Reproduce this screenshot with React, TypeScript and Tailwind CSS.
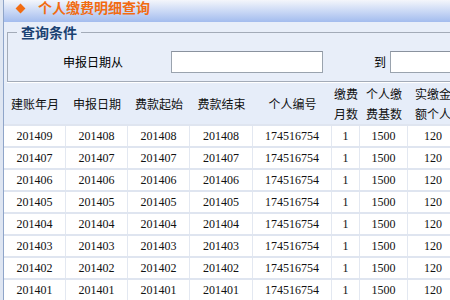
const rows = ['201409', '201407', '201406', '201405', '201404', '201403', '201402', '201401']
const rowDates = ['201408', '201407', '201406', '201405', '201404', '201403', '201402', '201401']

const cjk = "font-['Noto_Sans_CJK_SC',sans-serif]"
const num = "font-['Liberation_Serif','Noto_Sans_CJK_SC',serif]"

const cols = 'grid grid-cols-[62px_62px_62px_63px_79px_28px_48px_50px]'

function HeaderCell({ lines }: { lines: string[] }) {
  return (
    <div className="flex flex-col items-center justify-center leading-[20px] whitespace-nowrap">
      {lines.map((l) => (
        <span key={l}>{l}</span>
      ))}
    </div>
  )
}

export default function App() {
  return (
    <div className={`w-[450px] h-[300px] overflow-hidden bg-[#dfe6f2] pl-[3px] ${cjk}`}>
      <div className="h-full border-l border-[#8fa5c9] bg-[#e8eef9] flex flex-col">
        {/* Title bar */}
        <div className="h-[22px] shrink-0 bg-gradient-to-b from-[#f4f6fb] to-[#a3bcee] flex items-start pl-[13px]">
          <div className="w-[7px] h-[7px] rotate-45 bg-[#f26c12] mt-[5px]" />
          <span className="ml-[14px] text-[14px] leading-[15px] font-bold text-[#f26c12]">个人缴费明细查询</span>
        </div>

        {/* Query panel */}
        <fieldset className="mt-[2px] ml-[3px] w-[500px] border border-[#a3abb8] shadow-[0_1px_0_#ffffff] pb-[8px]">
          <legend className="ml-[9px] px-[4px] text-[14px] leading-[16px] font-bold text-[#1a4272]">查询条件</legend>
          <div className="flex items-center mt-[11px] text-[12px] text-black">
            <div className="w-[115px] text-right">申报日期从</div>
            <div className="ml-[48px] w-[152px] h-[22px] bg-white border border-[#9aa3ae] border-t-[#8a929e]" />
            <div className="w-[63px] text-right">到</div>
            <div className="ml-[4px] w-[152px] h-[22px] bg-white border border-[#9aa3ae] border-t-[#8a929e]" />
          </div>
        </fieldset>

        {/* Result table */}
        <div className="mt-[2px] text-[12px] text-[#111]">
          <div className={`${cols} h-[40px] bg-[#e6edf9]`}>
            <HeaderCell lines={['建账年月']} />
            <HeaderCell lines={['申报日期']} />
            <HeaderCell lines={['费款起始']} />
            <HeaderCell lines={['费款结束']} />
            <HeaderCell lines={['个人编号']} />
            <HeaderCell lines={['缴费', '月数']} />
            <HeaderCell lines={['个人缴', '费基数']} />
            <HeaderCell lines={['实缴金', '额个人']} />
          </div>
          {rows.map((r, i) => (
            <div key={r} className={`${cols} h-[22px] bg-white border-t-2 border-[#dfe5f0] ${num} text-[12px]`}>
              {[r, rowDates[i], rowDates[i], rowDates[i], '174516754', '1', '1500', '120'].map((v, j) => (
                <div
                  key={j}
                  className={`flex items-center justify-center ${j < 7 ? 'border-r border-[#e3e8f1]' : ''}`}
                >
                  {v}
                </div>
              ))}
            </div>
          ))}
        </div>
      </div>
    </div>
  )
}
